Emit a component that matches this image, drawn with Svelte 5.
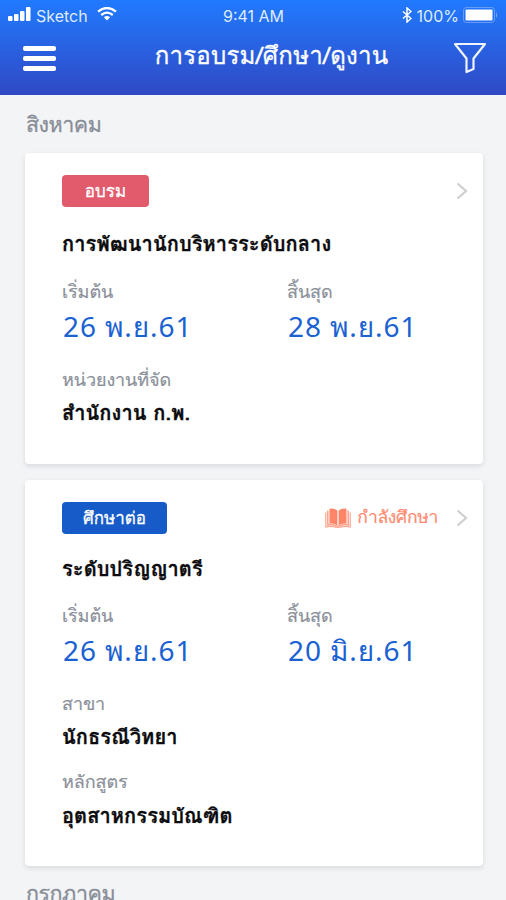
<script>
  const cards = [
    {
      kind: 'training',
      badge: 'อบรม',
      status: '',
      title: 'การพัฒนานักบริหารระดับกลาง',
      start: '26 พ.ย.61',
      end: '28 พ.ย.61',
      details: [{ label: 'หน่วยงานที่จัด', value: 'สำนักงาน ก.พ.' }],
    },
    {
      kind: 'study',
      badge: 'ศึกษาต่อ',
      status: 'กำลังศึกษา',
      title: 'ระดับปริญญาตรี',
      start: '26 พ.ย.61',
      end: '20 มิ.ย.61',
      details: [
        { label: 'สาขา', value: 'นักธรณีวิทยา' },
        { label: 'หลักสูตร', value: 'อุตสาหกรรมบัณฑิต' },
      ],
    },
  ]
</script>

<div class="screen">
  <header>
    <div class="statusbar">
      <div class="carrier">
        <svg class="signal" width="24" height="15" viewBox="0 0 24 15" fill="#fff">
          <rect x="0" y="9" width="4.500" height="5" rx="1" />
          <rect x="6" y="7" width="4.500" height="7" rx="1" />
          <rect x="12" y="4" width="4.500" height="10" rx="1" />
          <rect x="18" y="0" width="4.500" height="14" rx="1" />
        </svg>
        <span>Sketch</span>
        <svg class="wifi" width="20" height="14" viewBox="0 0 20 14" fill="none" stroke="#fff" stroke-width="2.300">
          <path d="M1 4.700 Q10 -2.700 19 4.700" />
          <path d="M4.200 8 Q10 3.200 15.800 8" />
          <path d="M10 13.500 L6.900 10.200 Q10 7.800 13.100 10.200 Z" fill="#fff" stroke="none" />
        </svg>
      </div>
      <span class="time">9:41 AM</span>
      <div class="power">
        <svg class="bluetooth" width="10" height="16" viewBox="0 0 10 16" fill="none" stroke="#fff" stroke-width="1.500">
          <path d="M1 4.500 L9 11.500 L5 15 V1 L9 4.500 L1 11.500" />
        </svg>
        <span>100%</span>
        <svg class="battery" width="36" height="16" viewBox="0 0 36 16">
          <rect x="0.500" y="0.500" width="31" height="15" rx="3" fill="none" stroke="#fff" stroke-opacity="0.300" />
          <rect x="2.500" y="2.500" width="27" height="11" rx="1" fill="#fff" />
          <path d="M33 5 Q35.500 8 33 11 Z" fill="#fff" fill-opacity="0.350" />
        </svg>
      </div>
    </div>
    <nav>
      <button class="menu" type="button" aria-label="เมนู">
        <i></i><i></i><i></i>
      </button>
      <h1>การอบรม/ศึกษา/ดูงาน</h1>
      <button class="filter" type="button" aria-label="ตัวกรอง">
        <svg width="34" height="32" viewBox="0 0 34 32" fill="none" stroke="#f0f4ff" stroke-width="2.200" stroke-linejoin="round">
          <path d="M2 2 H32 L20.500 16.500 V27 L13.500 30 V16.500 Z" />
        </svg>
      </button>
    </nav>
  </header>

  <h2>สิงหาคม</h2>

  <div class="list">
    {#each cards as card}
      <article class={card.kind}>
        <div class="top">
          <span class="badge">{card.badge}</span>
          {#if card.status}
            <svg class="book" width="26" height="20" viewBox="0 0 26 20" fill="#ff8568">
              <path d="M4.500 0.800 Q9 -0.300 12.400 2.500 V17.500 Q9 14.800 4.500 15.800 Z" />
              <path d="M21.500 0.800 Q17 -0.300 13.600 2.500 V17.500 Q17 14.800 21.500 15.800 Z" />
              <path d="M2.800 2.500 V17 Q8 16 11 18 H15 Q18 16 23.200 17 V2.500" fill="none" stroke="#ffa690" stroke-width="1.600" />
              <path d="M0.800 4.500 V19 Q7 17.800 11 19.300 H15 Q19 17.800 25.200 19 V4.500" fill="none" stroke="#ff9a82" stroke-width="1.100" />
            </svg>
            <span class="status">{card.status}</span>
          {/if}
          <svg class="chevron" width="12" height="18" viewBox="0 0 12 18" fill="none" stroke="#cfcfd2" stroke-width="2.200">
            <path d="M1.500 1.500 L10 9 L1.500 16.500" />
          </svg>
        </div>
        <h3>{card.title}</h3>
        <div class="dates">
          <div>
            <p class="label">เริ่มต้น</p>
            <p class="date">{card.start}</p>
          </div>
          <div>
            <p class="label">สิ้นสุด</p>
            <p class="date">{card.end}</p>
          </div>
        </div>
        {#each card.details as item}
          <div class="detail">
            <p class="label">{item.label}</p>
            <p class="value">{item.value}</p>
          </div>
        {/each}
      </article>
    {/each}
  </div>

  <h2 class="next">กรกฎาคม</h2>
</div>

<style>
  :global(body) {
    background: #f2f4f6;
  }
  .screen {
    height: 900px;
    overflow: hidden;
    background: #f2f4f6;
    font-family: Thonburi, Loma, Waree, "Noto Sans Thai Looped", "Noto Sans", sans-serif;
  }
  h1,
  h2,
  h3,
  p {
    margin: 0;
    white-space: nowrap;
  }
  header {
    box-sizing: border-box;
    height: 95px;
    background: linear-gradient(180deg, #217aff, #3049c4);
    color: #fff;
  }
  .statusbar {
    display: grid;
    grid-template-columns: 1fr auto 1fr;
    align-items: center;
    height: 31px;
    padding: 0 7px 0 8px;
    font-family: Inter, sans-serif;
    font-size: 16px;
    color: #dfebff;
  }
  .carrier,
  .power {
    display: flex;
    align-items: center;
  }
  .carrier span {
    margin-left: 4px;
  }
  .signal {
    margin-top: -2px;
  }
  .wifi {
    margin-left: 9px;
    margin-top: -4px;
  }
  .power {
    justify-content: flex-end;
  }
  .power span {
    margin: 0 4px 0 5px;
  }
  .bluetooth,
  .battery {
    margin-top: -2px;
  }
  nav {
    display: flex;
    align-items: center;
    justify-content: space-between;
    height: 54px;
    padding: 0 19px 0 23px;
  }
  button {
    display: flex;
    border: 0;
    padding: 0;
    background: none;
  }
  .menu {
    flex-direction: column;
    gap: 5px;
  }
  .menu i {
    width: 33px;
    height: 5px;
    border-radius: 2px;
    background: #fff;
  }
  h1 {
    margin: -4px 0 0 34px;
    font-size: 24px;
    font-weight: 500;
    line-height: 36px;
    letter-spacing: 0.25px;
    -webkit-text-stroke: 0.3px;
  }
  h2 {
    height: 58px;
    padding-left: 26px;
    font-size: 21.500px;
    font-weight: 500;
    line-height: 58px;
    letter-spacing: -0.5px;
    color: #898d97;
    -webkit-text-stroke: 0.3px;
  }
  .list {
    display: grid;
    gap: 16px;
    padding: 0 23px 0 25px;
  }
  article {
    box-sizing: border-box;
    height: 311px;
    padding: 22px 15px 0 37px;
    border-radius: 4px;
    background: #fff;
    box-shadow: 0 2px 5px rgba(40, 50, 70, 0.13);
  }
  .study {
    height: 386px;
  }
  .top {
    display: flex;
    align-items: center;
    height: 32px;
  }
  .badge {
    width: 87px;
    margin-right: auto;
    border-radius: 4px;
    background: #e25b6d;
    color: #fff;
    font-size: 17px;
    font-weight: 500;
    line-height: 32px;
    text-align: center;
    -webkit-text-stroke: 0.3px;
  }
  .study .badge {
    width: 105px;
    background: #175bc8;
  }
  .status {
    margin: -2px 18px 0 6px;
    font-size: 17.500px;
    letter-spacing: -0.3px;
    color: #ff8a70;
    -webkit-text-stroke: 0.2px;
  }
  h3 {
    margin-top: 22px;
    font-size: 20px;
    line-height: 30px;
    letter-spacing: 0.1px;
    color: #0b0b0d;
    -webkit-text-stroke: 0.3px;
  }
  .study h3 {
    margin-top: 20px;
  }
  .dates {
    display: grid;
    grid-template-columns: 225px 1fr;
    margin-top: 20px;
  }
  .study .dates {
    margin-top: 19px;
  }
  .label {
    font-size: 18px;
    line-height: 26px;
    letter-spacing: -0.1px;
    color: #8b909a;
    -webkit-text-stroke: 0.2px;
  }
  .date {
    margin-top: 3px;
    padding-left: 1px;
    font-family: "Noto Sans", Thonburi, Loma, Waree, sans-serif;
    font-size: 28px;
    line-height: 36px;
    letter-spacing: 0.9px;
    color: #1a61d2;
  }
  .detail {
    margin-top: 23px;
  }
  .detail + .detail {
    margin-top: 17px;
  }
  .value {
    margin-top: 5px;
    font-size: 20px;
    font-weight: 700;
    line-height: 30px;
    letter-spacing: 0.1px;
    color: #0b0b0d;
    -webkit-text-stroke: 0.3px;
  }
  .detail + .detail .value {
    margin-top: 6px;
  }
  .next {
    height: 34px;
    line-height: 54px;
  }
</style>
